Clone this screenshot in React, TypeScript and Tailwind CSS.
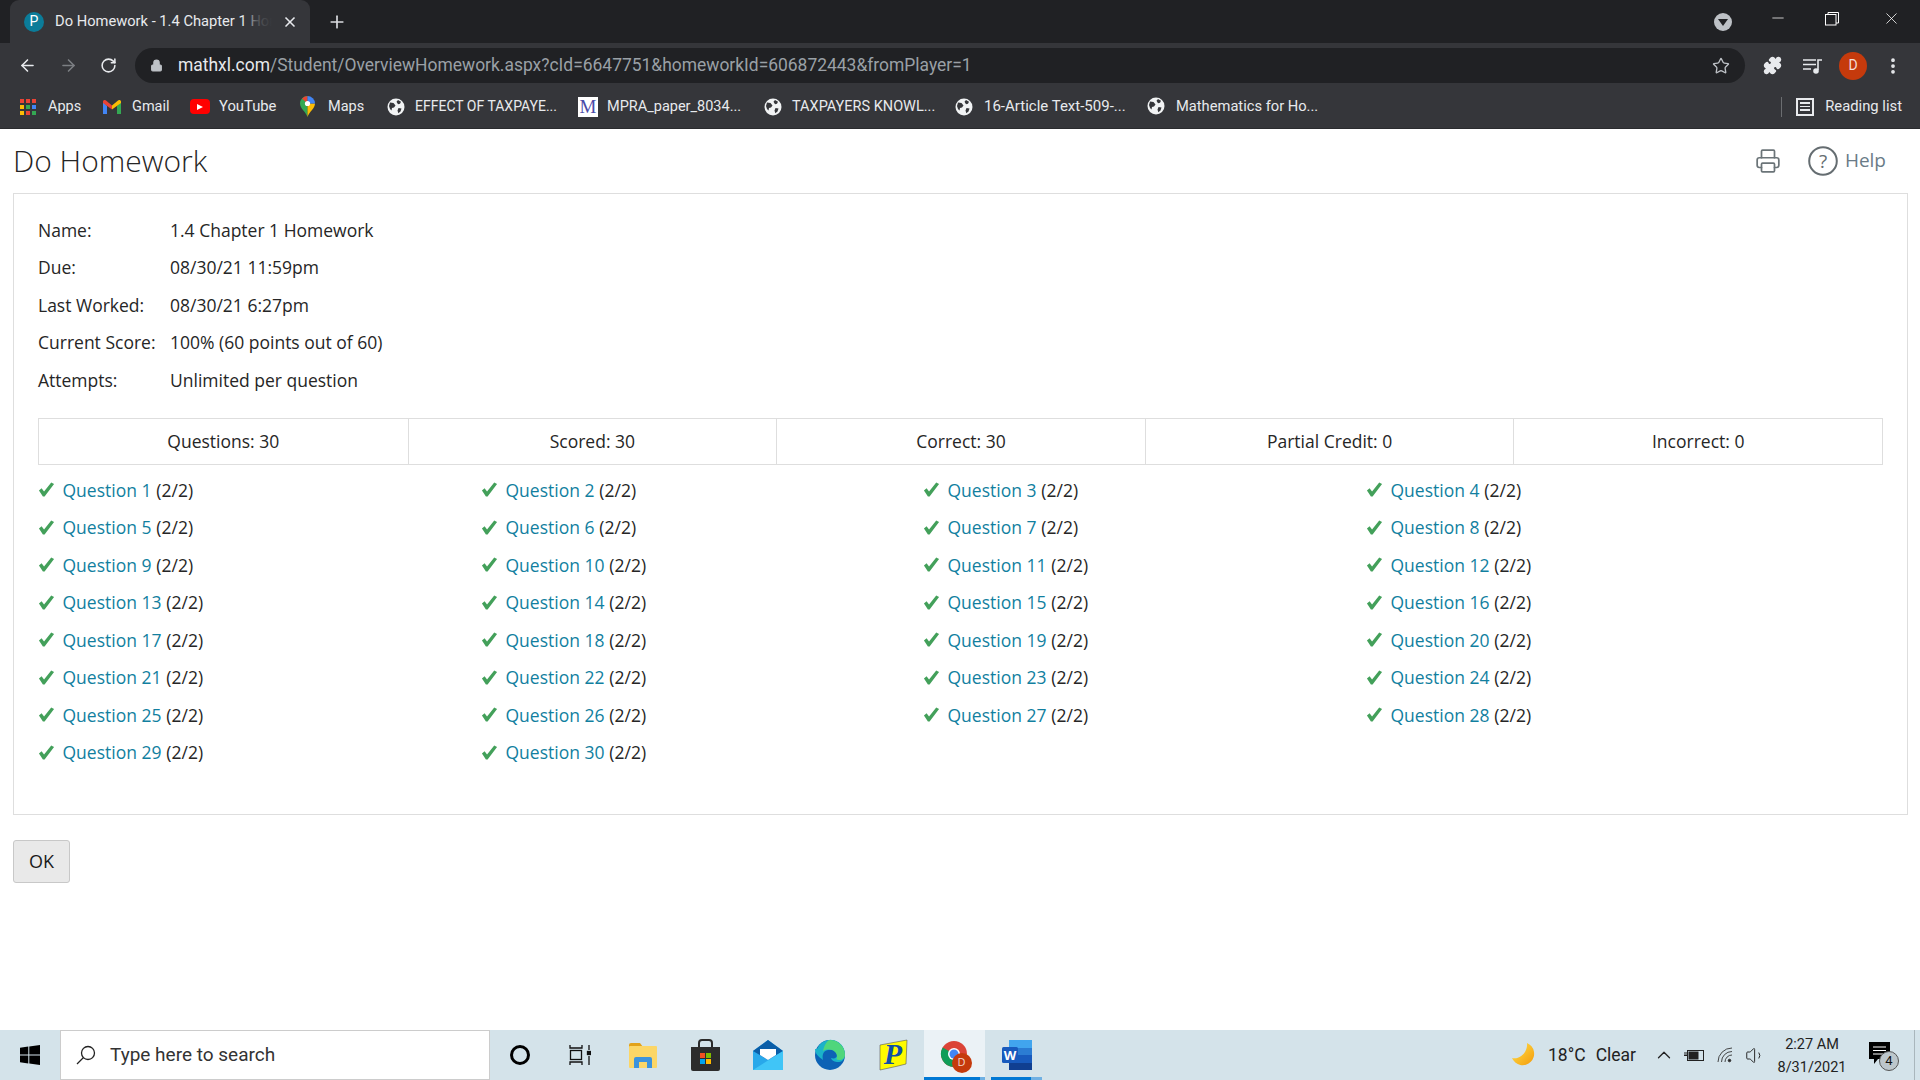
import { ArrowLeft, ArrowRight, RotateCw, Lock, Star, Plus, X, Minus, Puzzle, EllipsisVertical, Printer, ChevronUp, Volume1 } from "lucide-react";

const details = [
  ["Name:", "1.4 Chapter 1 Homework"],
  ["Due:", "08/30/21 11:59pm"],
  ["Last Worked:", "08/30/21 6:27pm"],
  ["Current Score:", "100% (60 points out of 60)"],
  ["Attempts:", "Unlimited per question"],
];

const stats = ["Questions: 30", "Scored: 30", "Correct: 30", "Partial Credit: 0", "Incorrect: 0"];

const questions = Array.from({ length: 30 }, (_, i) => i + 1);

const appsDots = ["bg-[#ea4335]", "bg-[#ea4335]", "bg-[#ea4335]", "bg-[#fbbc05]", "bg-[#34a853]", "bg-[#4285f4]", "bg-[#fbbc05]", "bg-[#ea4335]", "bg-[#34a853]"];

function Globe() {
  return (
    <svg width="18" height="18" viewBox="0 0 18 18">
      <circle cx="9" cy="9" r="8.5" fill="#f1f3f4" />
      <path d="M3 4.500l3.500.5 2 2.500-1.500 2-2 .5-.5 2.500-1.500-1.500-1-3zM11 2l3 1.800-1 2-2 .5-1.500-2.500zM11.500 10l3 .5-1 3-2.200 1.800-.8-2.800z" fill="#35363a" />
    </svg>
  );
}

function Bookmark({ icon, label, iconClass, className, textClass = "text-[14.5px]" }: { icon: React.ReactNode; label: string; iconClass: string; className: string; textClass?: string }) {
  return (
    <div className={`flex items-center shrink-0 ${className}`}>
      <div className={`flex justify-center shrink-0 ${iconClass}`}>{icon}</div>
      <span className={`text-[#e8eaed] whitespace-nowrap ${textClass}`}>{label}</span>
    </div>
  );
}

function Check() {
  return (
    <svg width="17" height="17" viewBox="0 0 18 17" className="shrink-0">
      <path d="M1 9.500l2.800-2.300 2.600 3.400L14 1l3 1.800L7 16h-1.800z" fill="#43a05a" />
    </svg>
  );
}

function TaskIcon({ className, children }: { className: string; children: React.ReactNode }) {
  return <div className={`relative h-full flex items-center justify-center shrink-0 ${className}`}>{children}</div>;
}

function ChromeLogo() {
  return (
    <svg width="30" height="30" viewBox="0 0 30 30">
      <circle cx="14" cy="14" r="13" fill="#db4437" />
      <path d="M14 14L2.700 7.500A13 13 0 0 0 14 27z" fill="#0f9d58" />
      <path d="M14 14h13a13 13 0 0 1-13 13z" fill="#f4b400" />
      <circle cx="14" cy="14" r="6" fill="#fff" />
      <circle cx="14" cy="14" r="4.500" fill="#4285f4" />
    </svg>
  );
}

export default function App() {
  return (
    <div className="w-[1920px] h-[1080px] flex flex-col overflow-hidden bg-white font-['Open_Sans',sans-serif] text-[#262626]">
      {/* tab strip */}
      <div className="h-[43px] bg-[#202124] flex items-end pl-[10px] shrink-0 font-['Roboto',sans-serif]">
        <div className="w-[300px] h-[43px] bg-[#35363a] rounded-t-[9px] flex items-center pl-[14px] pr-[10px]">
          <div className="w-[20px] h-[20px] rounded-full bg-[#0b7c99] text-white flex items-center justify-center text-[14px] shrink-0">P</div>
          <div className="relative w-[217px] ml-[11px] overflow-hidden whitespace-nowrap text-[14.7px] text-[#e8eaed]">
            Do Homework - 1.4 Chapter 1 Homework
            <div className="absolute right-0 top-0 bottom-0 w-[30px] bg-gradient-to-r from-transparent via-[#35363a]/80 to-[#35363a]" />
          </div>
          <X size={16} strokeWidth={2.5} className="text-[#e8eaed] ml-[10px]" />
        </div>
        <Plus size={20} strokeWidth={2} className="text-[#dadce0] ml-[17px] mb-[11px]" />
        <div className="flex-1" />
        <div className="self-stretch flex items-start">
          <div className="w-[18px] h-[18px] rounded-full bg-[#bdc1c6] flex items-center justify-center mt-[13px] mr-[37px]">
            <div className="w-0 h-0 border-l-[5px] border-r-[5px] border-t-[7px] border-l-transparent border-r-transparent border-t-[#202124]" />
          </div>
          <Minus size={18} strokeWidth={1} className="text-white mt-[9px] mr-[38px]" />
          <svg width="14" height="14" viewBox="0 0 14 14" className="mt-[12px] mr-[43px]" fill="none" stroke="#fff" strokeWidth="1">
            <rect x="0.500" y="2.500" width="10.500" height="10.500" />
            <path d="M3 2.500V.5h10.500V11H11" />
          </svg>
          <X size={19} strokeWidth={1} className="text-white mt-[9px] mr-[19px]" />
        </div>
      </div>

      {/* toolbar */}
      <div className="h-[42px] bg-[#35363a] flex items-center shrink-0 font-['Roboto',sans-serif] pt-[3px]">
        <div className="w-[135px] flex items-center shrink-0 pl-[18px]">
          <ArrowLeft size={19} strokeWidth={2} className="text-[#e8eaed]" />
          <ArrowRight size={19} strokeWidth={2} className="text-[#7c7f83] ml-[22px]" />
          <RotateCw size={17} strokeWidth={2.2} className="text-[#e8eaed] ml-[22px]" />
        </div>
        <div className="w-[1610px] h-[35px] bg-[#202124] rounded-full flex items-center pl-[15px] pr-[15px] shrink-0">
          <Lock size={13} className="text-[#bdc1c6] fill-[#bdc1c6] shrink-0" />
          <span className="ml-[15px] text-[17.45px] whitespace-nowrap text-[#9aa0a6]">
            <span className="text-[#e8eaed]">mathxl.com</span>/Student/OverviewHomework.aspx?cId=6647751&homeworkId=606872443&fromPlayer=1
          </span>
          <div className="flex-1" />
          <Star size={18} strokeWidth={1.8} className="text-[#bdc1c6]" />
        </div>
        <div className="flex items-center ml-[18px]">
          <Puzzle size={19} className="text-[#e8eaed] fill-[#e8eaed]" />
          <svg width="20" height="16" viewBox="0 0 20 16" className="ml-[21px]" fill="none" stroke="#e8eaed" strokeWidth="1.600">
            <path d="M0 2h13M0 6.500h13M0 11h8" />
            <path d="M15 12V2h4" />
            <circle cx="13" cy="13" r="2" fill="#e8eaed" />
          </svg>
          <div className="w-[28px] h-[28px] rounded-full bg-[#c53a0c] text-[#f5ded5] text-[14px] flex items-center justify-center ml-[16px]">D</div>
          <EllipsisVertical size={20} strokeWidth={2.5} className="text-[#e8eaed] ml-[16px]" />
        </div>
      </div>

      {/* bookmarks */}
      <div className="h-[44px] bg-[#35363a] border-b border-[#2a2b2e] flex items-center shrink-0 font-['Roboto',sans-serif] pl-[20px]">
        <Bookmark
          className="w-[83px]"
          iconClass="w-[16px] mr-[12px]"
          label="Apps"
          icon={
            <div className="grid grid-cols-3 gap-[2px] w-[16px]">
              {appsDots.map((c, i) => (
                <div key={i} className={`h-[4px] ${c}`} />
              ))}
            </div>
          }
        />
        <Bookmark
          className="w-[87px]"
          iconClass="w-[18px] mr-[11px]"
          label="Gmail"
          icon={
            <svg width="18" height="14" viewBox="0 0 18 14">
              <path d="M0 1.500V14h4V6z" fill="#4285f4" />
              <path d="M18 1.500V14h-4V6z" fill="#34a853" />
              <path d="M0 1.500C0 0 2 -.5 3 .5L9 5.500l-.0 4L0 3z" fill="#ea4335" />
              <path d="M18 1.500C18 0 16 -.5 15 .5L9 5.500v4l9-6.500z" fill="#fbbc05" />
            </svg>
          }
        />
        <Bookmark
          className="w-[110px]"
          iconClass="w-[20px] mr-[9px]"
          textClass="text-[14.8px]"
          label="YouTube"
          icon={
            <div className="w-[20px] h-[15px] bg-[#f00] rounded-[4px] flex items-center justify-center">
              <div className="w-0 h-0 border-t-[3.500px] border-b-[3.500px] border-l-[6px] border-t-transparent border-b-transparent border-l-white" />
            </div>
          }
        />
        <Bookmark
          className="w-[87px]"
          iconClass="w-[15px] mr-[13px]"
          label="Maps"
          icon={
            <svg width="15" height="21" viewBox="0 0 15 21">
              <path d="M7.500 21C6 16 0 12.500 0 7.500A7.500 7.500 0 0 1 7.500 0z" fill="#34a853" />
              <path d="M7.500 21C9 16 15 12.500 15 7.500H7.500z" fill="#fbbc05" />
              <path d="M2 2.500L7.500 7.500V0A7.500 7.500 0 0 0 2 2.500z" fill="#ea4335" />
              <path d="M7.500 0A7.500 7.500 0 0 1 15 7.500H7.500z" fill="#4285f4" />
              <circle cx="7.500" cy="7.500" r="2.600" fill="#fff" />
            </svg>
          }
        />
        <Bookmark className="w-[191px]" iconClass="w-[18px] mr-[10px]" textClass="text-[14px]" label="EFFECT OF TAXPAYE..." icon={<Globe />} />
        <Bookmark
          className="w-[186px]"
          iconClass="w-[20px] mr-[9px]"
          label="MPRA_paper_8034..."
          icon={
            <div className="w-[20px] h-[20px] bg-white flex items-center justify-center text-[#4a4aa8] text-[19px] leading-none font-['Liberation_Serif',serif]">M</div>
          }
        />
        <Bookmark className="w-[191px]" iconClass="w-[18px] mr-[10px]" label="TAXPAYERS KNOWL..." icon={<Globe />} />
        <Bookmark className="w-[192px]" iconClass="w-[18px] mr-[11px]" textClass="text-[15px]" label="16-Article Text-509-..." icon={<Globe />} />
        <Bookmark className="w-[200px]" iconClass="w-[18px] mr-[11px]" textClass="text-[14.7px]" label="Mathematics for Ho..." icon={<Globe />} />
        <div className="flex-1" />
        <div className="w-px h-[20px] bg-[#6b6d70]" />
        <div className="ml-[14px] w-[18px] h-[18px] border-2 border-[#e8eaed] flex flex-col justify-center gap-[2px] px-[2px]">
          <div className="h-[1.500px] bg-[#e8eaed]" />
          <div className="h-[1.500px] bg-[#e8eaed]" />
          <div className="h-[1.500px] bg-[#e8eaed]" />
        </div>
        <span className="ml-[11px] mr-[18px] text-[14.8px] text-[#e8eaed] whitespace-nowrap">Reading list</span>
      </div>

      {/* page */}
      <div className="flex-1 min-h-0 flex flex-col pl-[13px] pr-[12px]">
        <div className="h-[64px] flex items-center justify-between shrink-0">
          <h1 className="text-[30px] font-light text-[#252525] mb-[1px]">Do Homework</h1>
          <div className="flex items-center pr-[22px] mb-[1px]">
            <Printer size={26} strokeWidth={1.6} className="text-[#6b7478]" />
            <svg width="30" height="30" viewBox="0 0 30 30" className="ml-[27px]" fill="none">
              <circle cx="15" cy="15" r="13.800" stroke="#656d71" strokeWidth="2" />
              <text x="15" y="21.500" textAnchor="middle" fontSize="19" fill="#656d71" fontFamily="Open Sans, sans-serif">?</text>
            </svg>
            <span className="ml-[7px] text-[19px] text-[#6a7b87]">Help</span>
          </div>
        </div>

        <div className="border border-[#dedede] pt-[17px] pb-[41px] px-[24px] h-[622px] shrink-0 text-[17.5px]">
          {details.map(([label, value]) => (
            <div key={label} className="h-[37.500px] flex items-center">
              <span className="w-[132px] shrink-0">{label}</span>
              <span>{value}</span>
            </div>
          ))}
          <div className="mt-[19px] grid grid-cols-5 h-[47px] border border-[#dedede]">
            {stats.map((s, i) => (
              <div key={s} className={`flex items-center justify-center ${i > 0 ? "border-l border-[#dedede]" : ""}`}>{s}</div>
            ))}
          </div>
          <div className="mt-[6.600px] grid grid-cols-[443px_442px_443px_1fr]">
            {questions.map((n) => (
              <div key={n} className="h-[37.500px] flex items-center">
                <Check />
                <span className="ml-[7.500px] text-[#127f9f]">Question {n}</span>
                <span className="ml-[4.800px]">(2/2)</span>
              </div>
            ))}
          </div>
        </div>

        <button className="mt-[25px] w-[57px] h-[43px] bg-[#e9e9e9] border border-[#c8c8c8] rounded-[3px] text-[18px] text-[#1a1a1a] shrink-0">OK</button>
      </div>

      {/* taskbar */}
      <div className="h-[50px] bg-[#d4e3ea] flex items-center shrink-0">
        <div className="w-[60px] flex justify-center shrink-0">
          <svg width="20" height="20" viewBox="0 0 20 20" fill="#000">
            <path d="M0 2.800l8.300-1.200v7.900H0zM9.300 1.400L20 0v9.500H9.300zM0 10.500h8.300v7.900L0 17.200zM9.300 10.500H20V20L9.300 18.600z" />
          </svg>
        </div>
        <div className="w-[430px] h-full bg-white border border-[#cccccc] flex items-center pl-[15px] shrink-0">
          <svg width="20" height="20" viewBox="0 0 20 20" fill="none" stroke="#222" strokeWidth="1.300">
            <circle cx="12" cy="8" r="6.500" />
            <path d="M7.500 12.500L1 19" />
          </svg>
          <span className="ml-[14px] text-[19px] text-[#333] font-['Roboto',sans-serif]">Type here to search</span>
        </div>
        <TaskIcon className="w-[60px]">
          <div className="w-[20px] h-[20px] rounded-full border-[3px] border-black" />
        </TaskIcon>
        <TaskIcon className="w-[60px]">
          <svg width="22" height="20" viewBox="0 0 22 20" fill="none" stroke="#111" strokeWidth="1.300">
            <path d="M1 0v3h12V0M1 20v-3h12v3M20 0v5M20 11v9" />
            <rect x="1.500" y="5.500" width="11" height="9" />
            <rect x="18.500" y="6.500" width="3" height="3" fill="#111" />
          </svg>
        </TaskIcon>
        <TaskIcon className="w-[66px]">
          <svg width="28" height="25" viewBox="0 0 28 25">
            <path d="M0 2a2 2 0 0 1 2-2h9l3 4H0z" fill="#e2a21a" />
            <rect y="3" width="28" height="22" rx="1" fill="#fcd666" />
            <path d="M5 25v-9a2 2 0 0 1 2-2h14a2 2 0 0 1 2 2v9h-5v-6h-8v6z" fill="#3d93dc" />
          </svg>
        </TaskIcon>
        <TaskIcon className="w-[58px]">
          <svg width="29" height="32" viewBox="0 0 29 32">
            <path d="M8 9V4a3 3 0 0 1 3-3h7a3 3 0 0 1 3 3v5" fill="none" stroke="#2a2a2a" strokeWidth="2" />
            <path d="M0 8h29v22a2 2 0 0 1-2 2H2a2 2 0 0 1-2-2z" fill="#2c2c2c" />
            <rect x="9" y="14" width="5" height="5" fill="#f25022" />
            <rect x="15" y="14" width="5" height="5" fill="#7fba00" />
            <rect x="9" y="20" width="5" height="5" fill="#00a4ef" />
            <rect x="15" y="20" width="5" height="5" fill="#ffb900" />
          </svg>
        </TaskIcon>
        <TaskIcon className="w-[68px]">
          <svg width="30" height="30" viewBox="0 0 30 30">
            <path d="M0 11L15 0l15 11v19H0z" fill="#28a8ea" />
            <path d="M15 0l15 11-15 9-15-9z" fill="#0a5ea8" />
            <path d="M7 9h16v6l-8 5-8-5z" fill="#fff" />
            <path d="M30 11v19H0z" fill="#50d9ff" opacity="0.600" />
          </svg>
        </TaskIcon>
        <TaskIcon className="w-[56px]">
          <svg width="30" height="32" viewBox="0 0 30 32">
            <circle cx="15" cy="16" r="15" fill="#0c62b5" />
            <path d="M2 10A14.500 14.500 0 0 1 29 10c1 5 1 10-2 12-3 2-10 1-11-3 3 1 6 0 6-3 0-3-4-6-9-5-5 1-6 5-5 10-4-3-8-6-8-11z" fill="#1bb2c9" />
            <path d="M15 1a15 15 0 0 1 15 15c0 5-6 6-9 4 2-1 1-5-1-7-3-3-8-3-12-1 1-5 4-11 7-11z" fill="#4fd67c" />
          </svg>
        </TaskIcon>
        <TaskIcon className="w-[66px]">
          <div className="relative w-[29px] h-[32px] ml-[4px]">
            <svg width="29" height="32" viewBox="0 0 29 32" className="absolute inset-0">
              <path d="M1 6l27-5-1 24-8 2-18 4z" fill="#fffb00" stroke="#555" strokeWidth="0.600" />
            </svg>
            <span className="relative flex justify-center text-[#0f4fa8] text-[30px] leading-[30px] italic font-bold font-['Liberation_Serif',serif]">P</span>
          </div>
        </TaskIcon>
        <TaskIcon className="w-[56px] bg-[#ebf2f6]">
          <div className="relative w-[31px] h-[31px] ml-[6px]">
            <ChromeLogo />
            <div className="absolute right-[-1px] bottom-[-2px] w-[20px] h-[20px] rounded-full bg-[#c53a0c] text-[#f4d8cc] text-[11px] flex items-center justify-center">D</div>
          </div>
          <div className="absolute bottom-0 left-0 right-0 h-[3px] bg-[#0078d4]" />
        </TaskIcon>
        <div className="relative w-[5px] h-full bg-[#ebf2f6] shrink-0 mr-[6px]">
          <div className="absolute bottom-0 left-0 right-0 h-[3px] bg-[#6fb0e3]" />
        </div>
        <TaskIcon className="w-[51px]">
          <svg width="30" height="30" viewBox="0 0 30 30">
            <rect x="7" width="23" height="30" rx="1.500" fill="#2b7cd3" />
            <rect x="7" y="0" width="23" height="8" fill="#41a5ee" />
            <rect x="7" y="15" width="23" height="8" fill="#185abd" />
            <rect x="7" y="23" width="23" height="7" fill="#103f91" />
            <rect y="7" width="16" height="16" rx="1.500" fill="#185abd" />
            <text x="8" y="19.500" textAnchor="middle" fontSize="13" fontWeight="700" fill="#fff" fontFamily="Open Sans, sans-serif">W</text>
          </svg>
          <div className="absolute bottom-0 left-0 w-[40px] h-[3px] bg-[#0078d4]" />
          <div className="absolute bottom-0 left-[40px] right-0 h-[3px] bg-[#6fb0e3]" />
        </TaskIcon>

        <div className="flex-1" />

        {/* tray */}
        <svg width="24" height="24" viewBox="0 0 24 24" className="shrink-0">
          <defs>
            <linearGradient id="moon" x1="0" y1="0" x2="1" y2="1">
              <stop offset="0" stopColor="#ffe34d" />
              <stop offset="1" stopColor="#f49b0b" />
            </linearGradient>
          </defs>
          <path d="M15 0a11.500 11.500 0 1 1-15 15c7 2 16-5 15-15z" fill="url(#moon)" />
        </svg>
        <span className="ml-[12px] text-[17.5px] text-[#222] font-['Roboto',sans-serif]">18°C</span>
        <span className="ml-[10px] text-[17.5px] text-[#222] font-['Roboto',sans-serif]">Clear</span>
        <ChevronUp size={22} strokeWidth={1.4} className="ml-[17px] text-[#222]" />
        <svg width="21" height="13" viewBox="0 0 21 13" className="ml-[9px]" fill="none" stroke="#222" strokeWidth="1">
          <rect x="3.500" y="1.500" width="16" height="10" />
          <rect x="5" y="3" width="9" height="7" fill="#222" />
          <path d="M0 6.500h4M1 3v3M3 3v3" />
        </svg>
        <svg width="16" height="16" viewBox="0 0 16 16" className="ml-[12px]" fill="none" stroke="#333" strokeWidth="0.900">
          <path d="M1 15A14 14 0 0 1 15 1M4.500 15A10.500 10.500 0 0 1 15 4.500M8 15a7 7 0 0 1 7-7" />
          <circle cx="12.500" cy="13.500" r="1.300" fill="#222" />
        </svg>
        <Volume1 size={21} strokeWidth={1.1} className="ml-[12px] text-[#222]" />
        <div className="ml-[7px] w-[78px] flex flex-col items-center pt-[2px] text-[14.5px] leading-[23px] text-[#222] font-['Roboto',sans-serif]">
          <span>2:27 AM</span>
          <span>8/31/2021</span>
        </div>
        <div className="relative ml-[18px] mr-[17px] w-[28px] h-[26px]">
          <svg width="21" height="23" viewBox="0 0 21 23" className="absolute left-0 top-0">
            <path d="M0 0h21v17H9l-4 5v-5H0z" fill="#000" />
            <path d="M4 5h13M4 8.500h13M4 12h13" stroke="#fff" strokeWidth="1" />
          </svg>
          <div className="absolute right-[-2px] bottom-[-3px] w-[20px] h-[20px] rounded-full bg-[#bcc6cb] border border-[#555] text-[13px] text-[#111] font-['Roboto',sans-serif] flex items-center justify-center">4</div>
        </div>
        <div className="w-px h-full bg-[#a9b6bc] mr-[5px]" />
      </div>
    </div>
  );
}
